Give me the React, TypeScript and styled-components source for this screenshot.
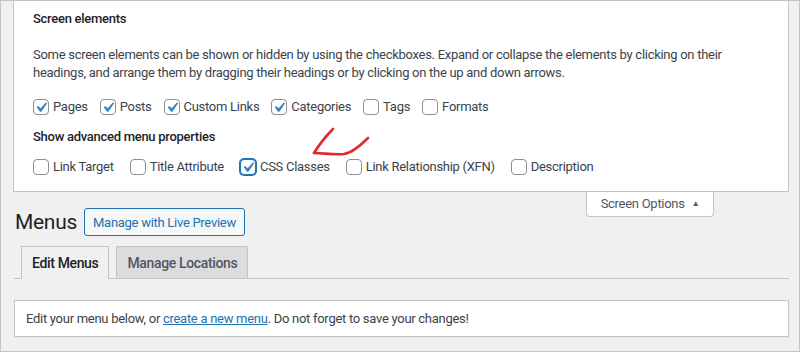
import styled, { createGlobalStyle } from "styled-components";

const GlobalStyle = createGlobalStyle`
  html, body {
    margin: 0;
    padding: 0;
    background: #fff;
  }
  body {
    font-family: Roboto, "Liberation Sans", Arial, sans-serif;
    font-size: 13px;
    letter-spacing: -0.28px;
    color: #3c434a;
  }
  * {
    box-sizing: border-box;
  }
`;

const Frame = styled.div`
  position: relative;
  width: 800px;
  height: 352px;
  border: 1px solid #c3c4c7;
  background: #f0f0f1;
  padding: 0 10px 0 12px;
  overflow: hidden;
`;

const Panel = styled.div`
  background: #fff;
  border: 1px solid #c3c4c7;
  border-top: none;
  padding: 9px 19px 15px 19px;
`;

const Legend = styled.div`
  font-size: 13px;
  line-height: 18px;
  font-weight: 500;
  color: #1d2327;
`;

const Intro = styled.p`
  margin: 18px 0 0;
  line-height: 18px;
  color: #3c434a;
`;

const CheckRow = styled.div<{ top: number; spacing?: number }>`
  display: flex;
  align-items: center;
  gap: ${(p) => p.spacing ?? 0}px;
  margin-top: ${(p) => p.top}px;
  height: 18px;
`;

const Option = styled.label`
  display: flex;
  align-items: center;
  line-height: 18px;
  white-space: nowrap;
`;

const Box = styled.span<{ focus?: boolean }>`
  width: 16px;
  height: 16px;
  margin-right: 4px;
  border-radius: 4px;
  border: 1px solid ${(p) => (p.focus ? "#2271b1" : "#8c8f94")};
  box-shadow: ${(p) => (p.focus ? "0 0 0 1px #2271b1" : "none")};
  background: #fff;
  display: flex;
  align-items: center;
  justify-content: center;
  svg {
    width: 21px;
    height: 21px;
    margin: -3px;
  }
`;

const ScreenMetaLinks = styled.div`
  display: flex;
  justify-content: flex-end;
  padding-right: 75px;
`;

const ScreenTab = styled.div`
  display: flex;
  align-items: center;
  justify-content: center;
  gap: 7px;
  width: 128px;
  height: 25px;
  background: #fff;
  border: 1px solid #c3c4c7;
  border-top: none;
  border-radius: 0 0 4px 4px;
  color: #50575e;
  padding-bottom: 1px;
`;

const Caret = styled.span`
  font-size: 8px;
  line-height: 1;
  color: #50575e;
`;

const Header = styled.div`
  display: flex;
  align-items: center;
  margin-top: -9px;
  height: 28px;
`;

const Title = styled.h1`
  margin: 0 7px 0 2px;
  font-size: 21px;
  letter-spacing: -0.3px;
  font-weight: 400;
  color: #1d2327;
  line-height: 28px;
`;

const PreviewButton = styled.button`
  height: 28px;
  width: 161px;
  padding: 0;
  white-space: nowrap;
  border: 1px solid #2271b1;
  border-radius: 3px;
  background: #f6f7f7;
  color: #2271b1;
  font-family: inherit;
  font-size: 13px;
  letter-spacing: -0.28px;
`;

const TabBar = styled.div`
  display: flex;
  margin: 10px 0 0 1px;
  padding-left: 7px;
  border-bottom: 1px solid #c3c4c7;
  gap: 7px;
`;

const NavTab = styled.div<{ active?: boolean }>`
  padding: 0 10px;
  display: flex;
  align-items: center;
  font-size: 14px;
  letter-spacing: -0.35px;
  font-weight: 500;
  border: 1px solid #c3c4c7;
  border-bottom: none;
  margin-bottom: ${(p) => (p.active ? -1 : 0)}px;
  height: ${(p) => (p.active ? 33 : 32)}px;
  background: ${(p) => (p.active ? "#f0f0f1" : "#dcdcde")};
  color: ${(p) => (p.active ? "#1d2327" : "#50575e")};
`;

const Notice = styled.div`
  margin: 21px 0 0 1px;
  height: 37px;
  background: #fff;
  border: 1px solid #c3c4c7;
  box-shadow: 0 1px 1px rgba(0, 0, 0, 0.04);
  padding: 0 11px;
  display: flex;
  align-items: center;
  color: #3c434a;
  a {
    color: #2271b1;
    text-decoration: underline;
  }
`;

const Annotation = styled.svg`
  position: absolute;
  left: 300px;
  top: 120px;
  width: 80px;
  height: 50px;
  pointer-events: none;
`;

function Check() {
  return (
    <svg viewBox="0 0 20 20">
      <path d="M14.83 4.89l1.34.94-5.81 8.38H9.02L5.78 9.67l1.34-1.25 2.57 2.4z" fill="#3582c4" />
    </svg>
  );
}

type Item = { label: string; checked?: boolean; focus?: boolean };

const elements: Item[] = [
  { label: "Pages", checked: true },
  { label: "Posts", checked: true },
  { label: "Custom Links", checked: true },
  { label: "Categories", checked: true },
  { label: "Tags" },
  { label: "Formats" },
];

const advanced: Item[] = [
  { label: "Link Target" },
  { label: "Title Attribute" },
  { label: "CSS Classes", checked: true, focus: true },
  { label: "Link Relationship (XFN)" },
  { label: "Description" },
];

function Options({ items, top, spacing }: { items: Item[]; top: number; spacing: number }) {
  return (
    <CheckRow top={top} spacing={spacing}>
      {items.map((it) => (
        <Option key={it.label}>
          <Box focus={it.focus}>{it.checked && <Check />}</Box>
          {it.label}
        </Option>
      ))}
    </CheckRow>
  );
}

export default function App() {
  return (
    <>
      <GlobalStyle />
      <Frame>
        <Panel>
          <Legend>Screen elements</Legend>
          <Intro>
            Some screen elements can be shown or hidden by using the checkboxes. Expand or collapse the elements by clicking on their
            headings, and arrange them by dragging their headings or by clicking on the up and down arrows.
          </Intro>
          <Options items={elements} top={16} spacing={12} />
          <CheckRow top={12}>
            <Legend>Show advanced menu properties</Legend>
          </CheckRow>
          <Options items={advanced} top={12} spacing={16} />
        </Panel>
        <ScreenMetaLinks>
          <ScreenTab>
            Screen Options <Caret>▲</Caret>
          </ScreenTab>
        </ScreenMetaLinks>
        <Header>
          <Title>Menus</Title>
          <PreviewButton>Manage with Live Preview</PreviewButton>
        </Header>
        <TabBar>
          <NavTab active>Edit Menus</NavTab>
          <NavTab>Manage Locations</NavTab>
        </TabBar>
        <Notice>
          <span>
            Edit your menu below, or <a href="#">create a new menu</a>. Do not forget to save your changes!
          </span>
        </Notice>
        <Annotation viewBox="300 120 80 50">
          <g fill="none" stroke="#e3282f" strokeWidth="2.6" strokeLinecap="round" strokeLinejoin="round">
            <path d="M367 137 C 358 146, 350 152, 343 153 C 333 154, 322 152, 313 152" />
            <path d="M313 152 C 318 144, 324 136, 332 128" />
          </g>
        </Annotation>
      </Frame>
    </>
  );
}
